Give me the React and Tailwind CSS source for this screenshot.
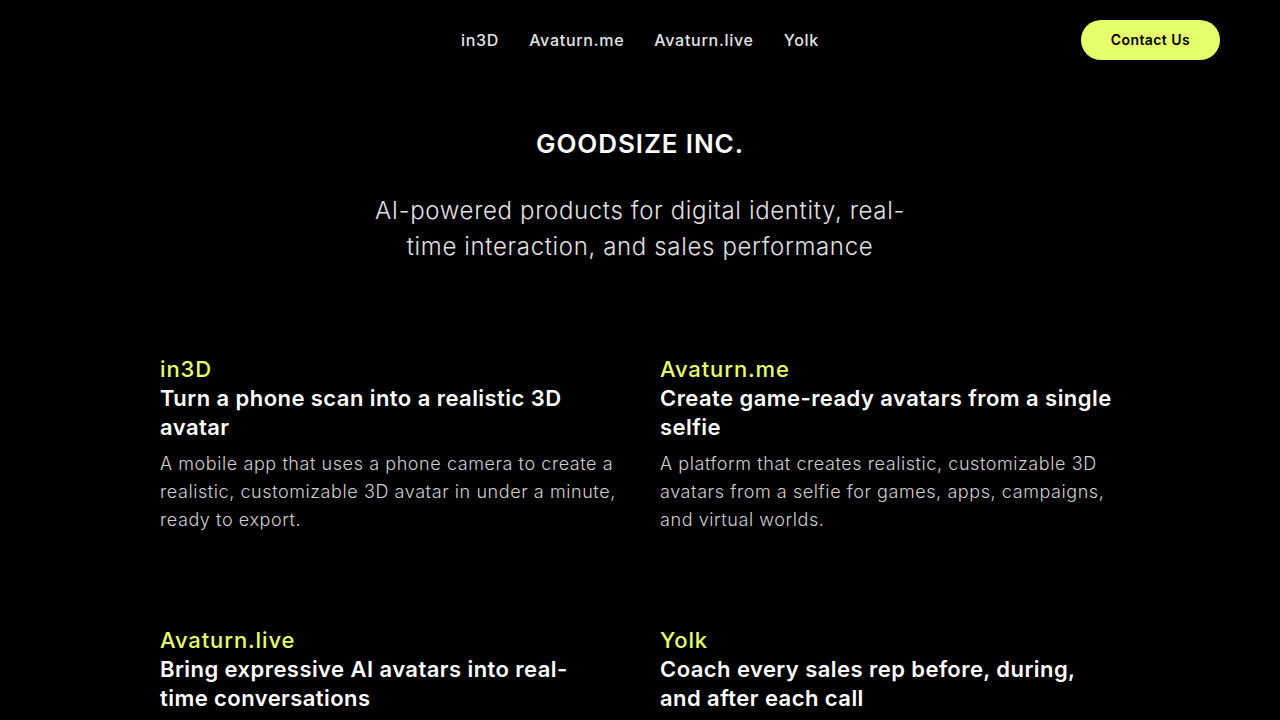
export default function App() {
  const products = [
    {
      name: 'in3D',
      title: 'Turn a phone scan into a realistic 3D avatar',
      body: 'A mobile app that uses a phone camera to create a realistic, customizable 3D avatar in under a minute, ready to export.',
    },
    {
      name: 'Avaturn.me',
      title: 'Create game-ready avatars from a single selfie',
      body: 'A platform that creates realistic, customizable 3D avatars from a selfie for games, apps, campaigns, and virtual worlds.',
    },
    {
      name: 'Avaturn.live',
      title: 'Bring expressive AI avatars into real-time conversations',
      body: 'Interactive AI avatars that listen, speak and react in real time for support, sales and education.',
    },
    {
      name: 'Yolk',
      title: 'Coach every sales rep before, during, and after each call',
      body: 'An AI sales coach that prepares reps, guides them live and reviews every conversation.',
    },
  ];

  return (
    <div className="min-h-screen bg-black text-white font-['Inter',sans-serif]">
      <header className="grid h-20 grid-cols-[1fr_auto_1fr] items-center px-[60px]">
        <div />
        <nav className="flex items-center gap-[30px] text-[16px] font-medium tracking-[0.045em] text-[#e4e4e4]">
          <a href="#">in3D</a>
          <a href="#">Avaturn.me</a>
          <a href="#">Avaturn.live</a>
          <a href="#">Yolk</a>
        </nav>
        <div className="flex justify-end">
          <button className="h-10 rounded-full bg-[#e4fe6c] px-[30px] pb-px text-[14px] font-semibold tracking-[0.03em] text-black">
            Contact Us
          </button>
        </div>
      </header>

      <section className="mt-12 flex flex-col items-center text-center">
        <h1 className="text-[26px] font-semibold leading-8 tracking-[0.035em]">GOODSIZE INC.</h1>
        <p className="mt-[33px] w-[545px] text-[24px] font-light leading-9 tracking-[0.027em] text-[#e2e2e2]">
          AI-powered products for digital identity, real-time interaction, and sales performance
        </p>
      </section>

      <section className="mx-auto mt-[90px] grid w-[960px] grid-cols-2 gap-x-10 gap-y-[92px]">
        {products.map((p) => (
          <div key={p.name}>
            <div className="text-[22px] font-medium leading-7 tracking-[0.04em] text-[#e4fe6c]">{p.name}</div>
            <h2 className="mt-px max-w-[454px] text-[22px] font-semibold leading-[29px] tracking-[0.02em]">{p.title}</h2>
            <p className="mt-2 text-[18px] font-light leading-7 tracking-[0.032em] text-[#d0d0d0]">{p.body}</p>
          </div>
        ))}
      </section>
    </div>
  );
}
